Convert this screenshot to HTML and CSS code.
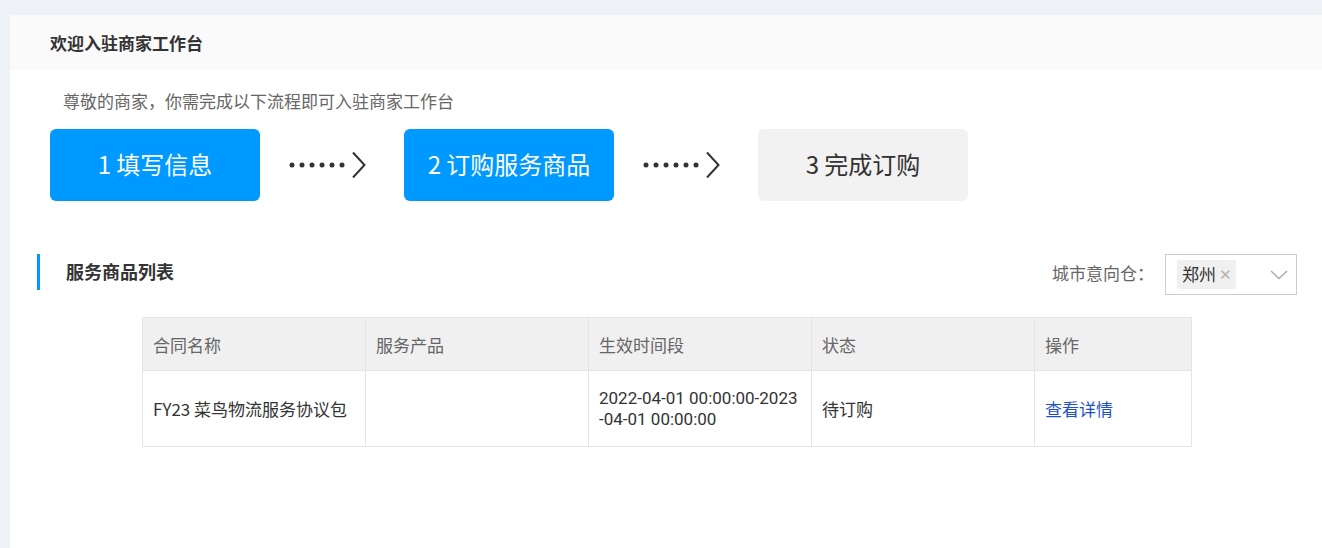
FILE: index.html
```html
<html>
    <head>
        <meta charset="utf-8">
        <link rel="stylesheet" href="styles.css">
    </head>
    <body>
        <div class="page">
            <div class="card">
                <div class="card-head">欢迎入驻商家工作台</div>
                <div class="card-body">
                    <p class="intro">尊敬的商家，你需完成以下流程即可入驻商家工作台</p>

                    <div class="steps">
                        <div class="step step-done">1 填写信息</div>
                        <div class="step-arrow">
                            <svg width="84" height="30" viewBox="0 0 84 30">
                                <circle cx="3" cy="15" r="2.5" fill="#333"/>
                                <circle cx="13" cy="15" r="2.5" fill="#333"/>
                                <circle cx="23" cy="15" r="2.5" fill="#333"/>
                                <circle cx="33" cy="15" r="2.5" fill="#333"/>
                                <circle cx="43" cy="15" r="2.5" fill="#333"/>
                                <circle cx="53" cy="15" r="2.5" fill="#333"/>
                                <path d="M64 2.5 L75.5 15 L64 27.5" fill="none" stroke="#333" stroke-width="2"/>
                            </svg>
                        </div>
                        <div class="step step-done">2 订购服务商品</div>
                        <div class="step-arrow">
                            <svg width="84" height="30" viewBox="0 0 84 30">
                                <circle cx="3" cy="15" r="2.5" fill="#333"/>
                                <circle cx="13" cy="15" r="2.5" fill="#333"/>
                                <circle cx="23" cy="15" r="2.5" fill="#333"/>
                                <circle cx="33" cy="15" r="2.5" fill="#333"/>
                                <circle cx="43" cy="15" r="2.5" fill="#333"/>
                                <circle cx="53" cy="15" r="2.5" fill="#333"/>
                                <path d="M64 2.5 L75.5 15 L64 27.5" fill="none" stroke="#333" stroke-width="2"/>
                            </svg>
                        </div>
                        <div class="step">3 完成订购</div>
                    </div>

                    <div class="section-head">
                        <div class="section-title">服务商品列表</div>
                        <div class="filter">
                            <span class="filter-label">城市意向仓：</span>
                            <div class="select">
                                <span class="tag">郑州<span class="tag-close">&#x2715;</span></span>
                                <svg class="select-arrow" width="18" height="10" viewBox="0 0 18 10">
                                    <path d="M1 1 L9 8.5 L17 1" fill="none" stroke="#aaa" stroke-width="1.4"/>
                                </svg>
                            </div>
                        </div>
                    </div>

                    <table class="goods">
                        <colgroup>
                            <col style="width:223px">
                            <col style="width:223px">
                            <col style="width:223px">
                            <col style="width:223px">
                            <col style="width:157px">
                        </colgroup>
                        <thead>
                            <tr>
                                <th>合同名称</th>
                                <th>服务产品</th>
                                <th>生效时间段</th>
                                <th>状态</th>
                                <th>操作</th>
                            </tr>
                        </thead>
                        <tbody>
                            <tr>
                                <td>FY23 菜鸟物流服务协议包</td>
                                <td></td>
                                <td>
                                    <div class="period">2022-04-01 00:00:00-2023</div>
                                    <div class="period">-04-01 00:00:00</div>
                                </td>
                                <td>待订购</td>
                                <td><a class="link" href="#">查看详情</a></td>
                            </tr>
                        </tbody>
                    </table>
                </div>
            </div>
        </div>
    </body>
</html>
```

FILE: styles.css
```css
body {
    margin: 0;
    background: #eef1f6;
    font-family: "Noto Sans CJK SC", "Noto Sans", sans-serif;
    color: #333;
}

.page {
    padding: 15px 0 0 10px;
}

.card {
    background: #fff;
    height: 533px;
}

.card-head {
    height: 55px;
    line-height: 55px;
    padding-left: 40px;
    background: #fafafa;
    font-size: 17px;
    font-weight: bold;
    color: #333;
}

.card-body {
    padding: 0 25px 0 0;
}

.intro {
    margin: 0;
    padding: 21px 0 0 53px;
    line-height: 20px;
    font-size: 17px;
    color: #666;
}

.steps {
    display: flex;
    align-items: center;
    margin: 18px 0 0 40px;
}

.step {
    width: 210px;
    height: 72px;
    box-sizing: border-box;
    padding-bottom: 3px;
    line-height: 69px;
    border-radius: 6px;
    background: #f2f2f2;
    color: #333;
    font-size: 24px;
    text-align: center;
}

.step-done {
    background: #0099ff;
    color: #fff;
}

.step-arrow {
    width: 144px;
    display: flex;
    justify-content: flex-start;
    padding-left: 30px;
    box-sizing: border-box;
}

.step-arrow svg {
    display: block;
    margin-left: -1px;
}

.section-head {
    display: flex;
    justify-content: space-between;
    align-items: flex-start;
    margin: 53px 0 0 27px;
}

.section-title {
    height: 36px;
    line-height: 35px;
    border-left: 3px solid #0099ff;
    padding-left: 26px;
    font-size: 18px;
    font-weight: bold;
    color: #333;
}

.filter {
    display: flex;
    align-items: center;
    height: 41px;
}

.filter-label {
    font-size: 17px;
    color: #666;
    margin-right: 11px;
    padding-bottom: 5px;
}

.select {
    display: flex;
    align-items: center;
    justify-content: space-between;
    width: 132px;
    height: 41px;
    box-sizing: border-box;
    border: 1px solid #ccc;
    padding: 0 8px 0 11px;
}

.tag {
    display: flex;
    align-items: center;
    height: 29px;
    padding: 0 4px 2px 5px;
    box-sizing: border-box;
    border-radius: 3px;
    background: #f0f0f0;
    font-size: 17px;
    color: #333;
}

.tag-close {
    margin-left: 3px;
    font-size: 15px;
    color: #b0b0b0;
}

.select-arrow {
    display: block;
}

.goods {
    margin: 22px 0 0 132px;
    border-collapse: collapse;
    table-layout: fixed;
    width: 1049px;
    font-size: 17px;
}

.goods th,
.goods td {
    border: 1px solid #e5e5e5;
    padding: 0 6px 0 10px;
    text-align: left;
    vertical-align: middle;
}

.goods th {
    height: 53px;
    background: #f0f0f0;
    color: #666;
    font-weight: normal;
}

.goods td {
    height: 76px;
    line-height: 22px;
    color: #333;
    white-space: nowrap;
}

.period {
    height: 21px;
    line-height: 21px;
    font-family: Roboto, "Noto Sans CJK SC", sans-serif;
    font-size: 17px;
}

.link {
    color: #1f4fc4;
    text-decoration: none;
}
```
